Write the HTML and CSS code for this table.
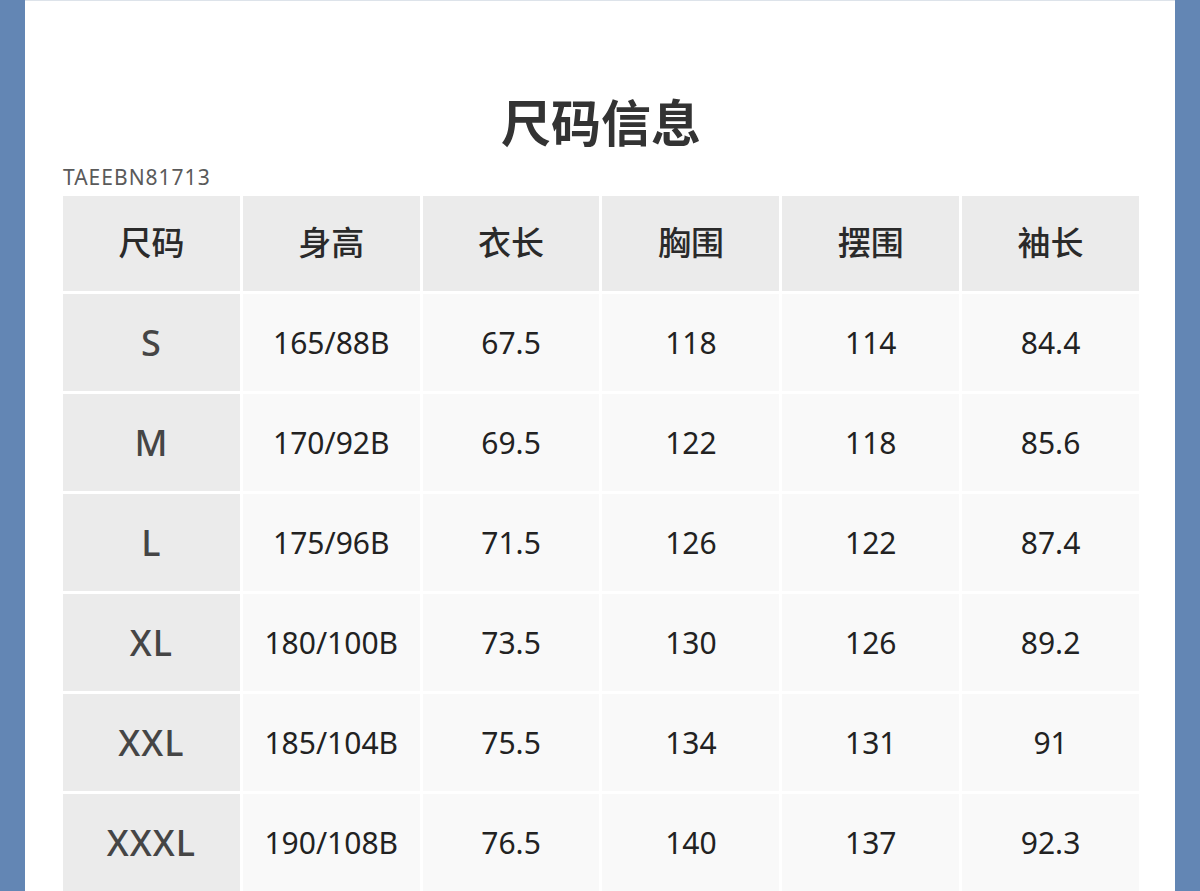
FILE: index.html
```html
<!DOCTYPE html>
<html lang="zh">
<head>
<meta charset="utf-8">
<title>尺码信息</title>
<link rel="stylesheet" href="styles.css">
</head>
<body>
<div class="panel">
  <h1 class="title">尺码信息</h1>
  <div class="code">TAEEBN81713</div>
  <div class="table">
    <div class="cell head">尺码</div>
    <div class="cell head">身高</div>
    <div class="cell head">衣长</div>
    <div class="cell head">胸围</div>
    <div class="cell head">摆围</div>
    <div class="cell head">袖长</div>

    <div class="cell size">S</div>
    <div class="cell">165/88B</div>
    <div class="cell">67.5</div>
    <div class="cell">118</div>
    <div class="cell">114</div>
    <div class="cell">84.4</div>

    <div class="cell size">M</div>
    <div class="cell">170/92B</div>
    <div class="cell">69.5</div>
    <div class="cell">122</div>
    <div class="cell">118</div>
    <div class="cell">85.6</div>

    <div class="cell size">L</div>
    <div class="cell">175/96B</div>
    <div class="cell">71.5</div>
    <div class="cell">126</div>
    <div class="cell">122</div>
    <div class="cell">87.4</div>

    <div class="cell size">XL</div>
    <div class="cell">180/100B</div>
    <div class="cell">73.5</div>
    <div class="cell">130</div>
    <div class="cell">126</div>
    <div class="cell">89.2</div>

    <div class="cell size">XXL</div>
    <div class="cell">185/104B</div>
    <div class="cell">75.5</div>
    <div class="cell">134</div>
    <div class="cell">131</div>
    <div class="cell">91</div>

    <div class="cell size">XXXL</div>
    <div class="cell">190/108B</div>
    <div class="cell">76.5</div>
    <div class="cell">140</div>
    <div class="cell">137</div>
    <div class="cell">92.3</div>
  </div>
</div>
</body>
</html>
```

FILE: styles.css
```css
html, body {
  margin: 0;
  padding: 0;
}
body {
  background: #6386b4;
  font-family: "Noto Sans", "Noto Sans CJK SC", sans-serif;
  height: 891px;
  overflow: hidden;
}
.panel {
  margin: 0 25px;
  background: #ffffff;
  border-top: 1px solid #dde3ea;
  padding: 0 36px 0 38px;
  height: 900px;
}
.title {
  margin: 0;
  padding-top: 93px;
  font-family: "Noto Sans CJK SC", sans-serif;
  font-size: 50px;
  line-height: 52px;
  font-weight: 700;
  color: #333333;
  text-align: center;
}
.code {
  margin-top: 19px;
  font-size: 21px;
  line-height: 24px;
  color: #5a5a5a;
  letter-spacing: 1px;
}
.table {
  margin-top: 7px;
  display: grid;
  grid-template-columns: repeat(6, 1fr);
  grid-template-rows: 95px repeat(6, 97px);
  gap: 3px;
  width: 1076px;
}
.cell {
  display: flex;
  align-items: center;
  justify-content: center;
  background: #f9f9f9;
  font-size: 30px;
  color: #222222;
}
.head {
  background: #ebebeb;
  font-family: "Noto Sans CJK SC", sans-serif;
  font-size: 33px;
  font-weight: 500;
  color: #2a2a2a;
  padding-bottom: 6px;
}
.size {
  background: #ebebeb;
  font-size: 36px;
  font-weight: 500;
  color: #454545;
  letter-spacing: 1px;
}
```
